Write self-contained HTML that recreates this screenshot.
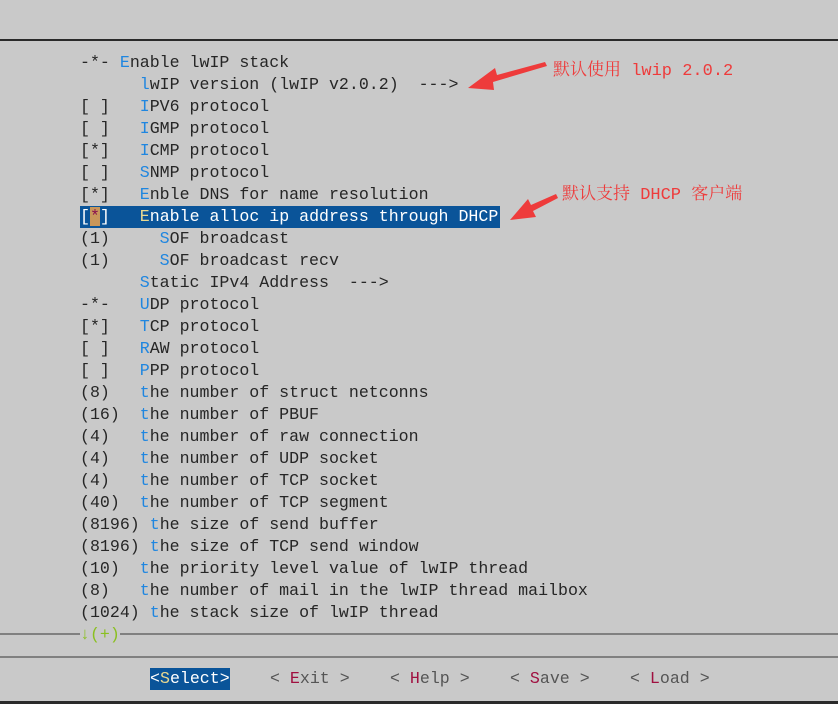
<!DOCTYPE html>
<html><head><meta charset="utf-8"><style>
body{margin:0;width:838px;height:704px;background:#c9c9c9;position:relative;overflow:hidden;font-family:"Liberation Mono",monospace;font-size:16.6px;color:#262626}
.r{position:absolute;left:80px;height:22px;line-height:22px;white-space:pre}
.b{color:#1f86e0}
.hl{background:#0a5499;color:#fff;width:420px}
.hl .b{color:#e8d890}
.st{background:#c8965a;color:#8a1050}
.ann{position:absolute;color:#ee3b3b;font-family:"Noto Serif CJK SC","Liberation Mono",serif;font-size:17px;white-space:pre}
.ann span{font-family:"Liberation Mono",monospace}
.btn{position:absolute;top:668px;height:22px;line-height:22px;white-space:pre;color:#555}
.btn i{font-style:normal;color:#a01040}
</style></head><body>
<div style="position:absolute;left:0;top:39px;width:838px;height:2px;background:#2a2a2a"></div>
<div class="r" style="top:52px">-*- <span class="b">E</span>nable lwIP stack</div>
<div class="r" style="top:74px">      <span class="b">l</span>wIP version (lwIP v2.0.2)  ---&gt;</div>
<div class="r" style="top:96px">[ ]   <span class="b">I</span>PV6 protocol</div>
<div class="r" style="top:118px">[ ]   <span class="b">I</span>GMP protocol</div>
<div class="r" style="top:140px">[*]   <span class="b">I</span>CMP protocol</div>
<div class="r" style="top:162px">[ ]   <span class="b">S</span>NMP protocol</div>
<div class="r" style="top:184px">[*]   <span class="b">E</span>nble DNS for name resolution</div>
<div class="r hl" style="top:206px">[<span class="st">*</span>]   <span class="b">E</span>nable alloc ip address through DHCP</div>
<div class="r" style="top:228px">(1)     <span class="b">S</span>OF broadcast</div>
<div class="r" style="top:250px">(1)     <span class="b">S</span>OF broadcast recv</div>
<div class="r" style="top:272px">      <span class="b">S</span>tatic IPv4 Address  ---&gt;</div>
<div class="r" style="top:294px">-*-   <span class="b">U</span>DP protocol</div>
<div class="r" style="top:316px">[*]   <span class="b">T</span>CP protocol</div>
<div class="r" style="top:338px">[ ]   <span class="b">R</span>AW protocol</div>
<div class="r" style="top:360px">[ ]   <span class="b">P</span>PP protocol</div>
<div class="r" style="top:382px">(8)   <span class="b">t</span>he number of struct netconns</div>
<div class="r" style="top:404px">(16)  <span class="b">t</span>he number of PBUF</div>
<div class="r" style="top:426px">(4)   <span class="b">t</span>he number of raw connection</div>
<div class="r" style="top:448px">(4)   <span class="b">t</span>he number of UDP socket</div>
<div class="r" style="top:470px">(4)   <span class="b">t</span>he number of TCP socket</div>
<div class="r" style="top:492px">(40)  <span class="b">t</span>he number of TCP segment</div>
<div class="r" style="top:514px">(8196) <span class="b">t</span>he size of send buffer</div>
<div class="r" style="top:536px">(8196) <span class="b">t</span>he size of TCP send window</div>
<div class="r" style="top:558px">(10)  <span class="b">t</span>he priority level value of lwIP thread</div>
<div class="r" style="top:580px">(8)   <span class="b">t</span>he number of mail in the lwIP thread mailbox</div>
<div class="r" style="top:602px">(1024) <span class="b">t</span>he stack size of lwIP thread</div>
<div style="position:absolute;left:0;top:633px;width:838px;height:2px;background:#808080"></div>
<div class="r" style="top:624px;background:#c9c9c9;color:#8ac020">↓(+)</div>
<div style="position:absolute;left:0;top:656px;width:838px;height:2px;background:#808080"></div>
<div class="btn" style="left:150px;background:#0a5499;color:#fff">&lt;<span style="color:#e8d890">S</span>elect&gt;</div>
<div class="btn" style="left:270px">&lt; <i>E</i>xit &gt;</div>
<div class="btn" style="left:390px">&lt; <i>H</i>elp &gt;</div>
<div class="btn" style="left:510px">&lt; <i>S</i>ave &gt;</div>
<div class="btn" style="left:630px">&lt; <i>L</i>oad &gt;</div>
<div style="position:absolute;left:0;top:701px;width:838px;height:3px;background:#2a2a2a"></div>
<div class="ann" style="left:553px;top:55px">默认使用<span> lwip 2.0.2</span></div>
<div class="ann" style="left:562px;top:179px">默认支持<span> DHCP </span>客户端</div>
<svg style="position:absolute;left:0;top:0" width="838" height="704">
<path d="M545 62 L497 75 L495 68 L468 88 L494 90 L493 82 L547 66 Z" fill="#ee3b3b"/>
<path d="M556 194 L531 205 L528 199 L510 220 L536 217 L533 211 L558 198 Z" fill="#ee3b3b"/>
</svg>
</body></html>
